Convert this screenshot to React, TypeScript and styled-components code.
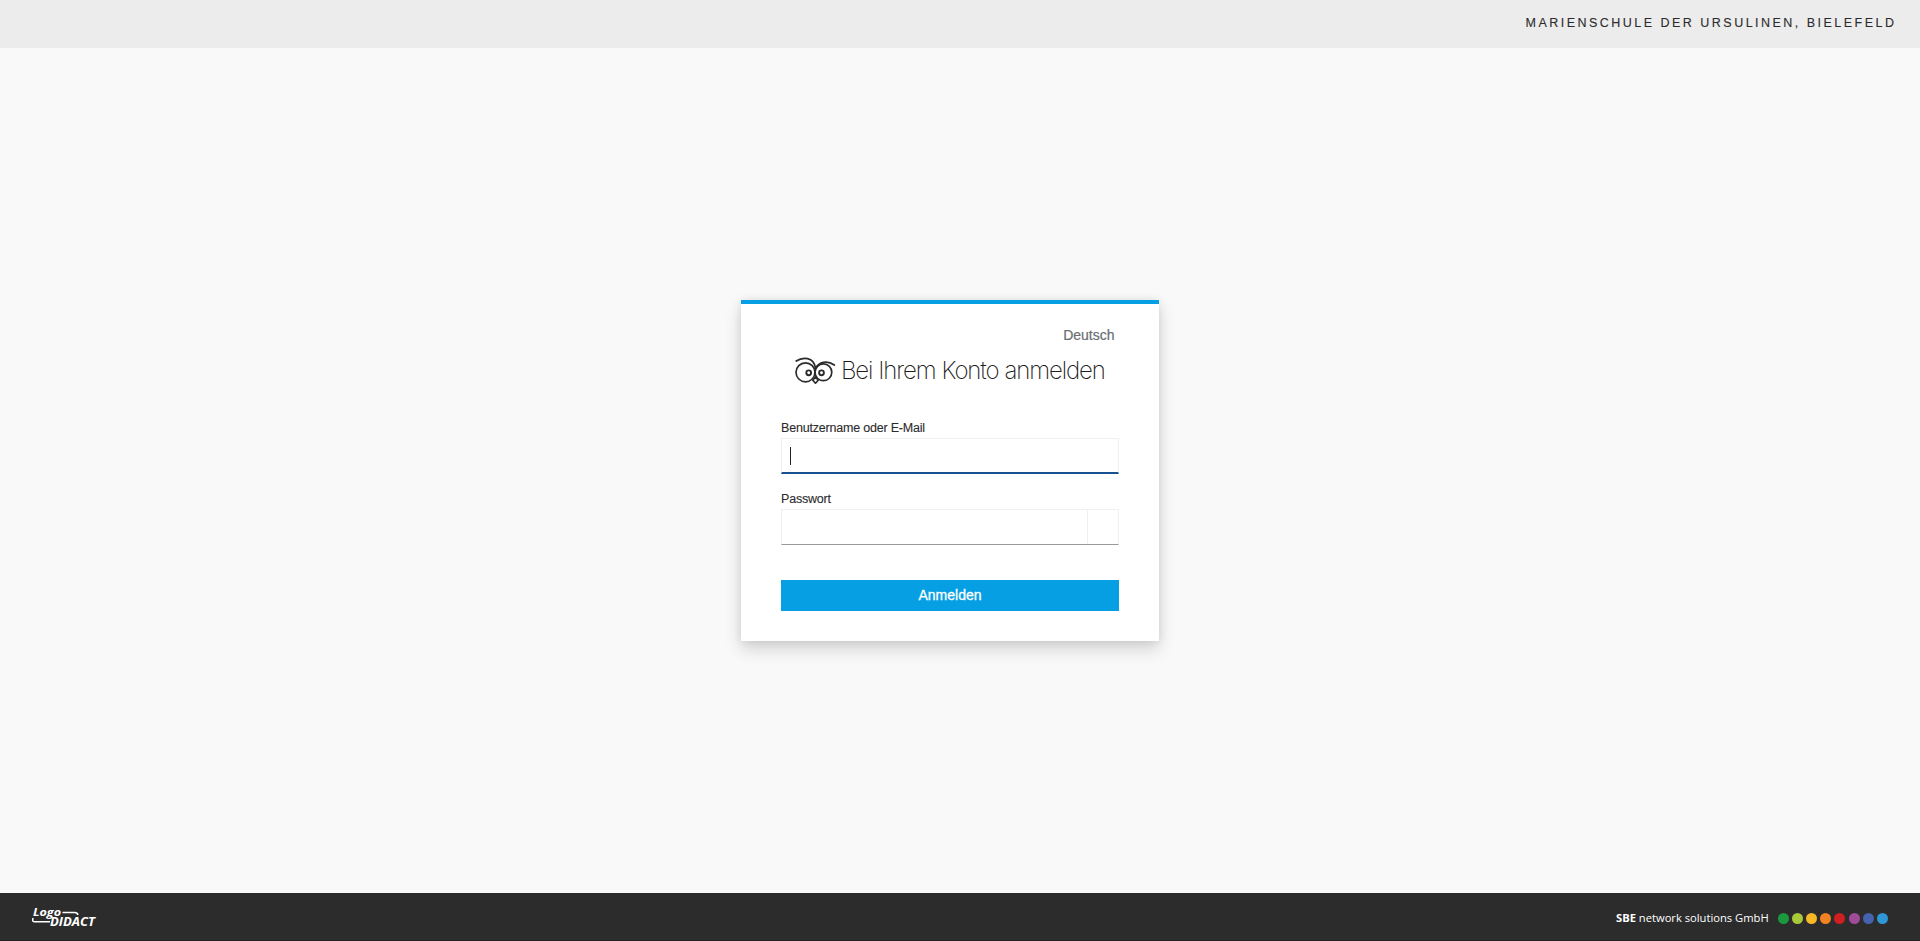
import React from "react";
import styled, { createGlobalStyle } from "styled-components";

const GlobalStyle = createGlobalStyle`
  * { box-sizing: border-box; }
  body {
    margin: 0;
    background: #f9f9f9;
    color: #2b2b2b;
    font-family: "Liberation Sans", Arial, sans-serif;
  }
`;

const Page = styled.div`
  display: flex;
  flex-direction: column;
  height: 100vh;
  overflow: hidden;
`;

const Header = styled.header`
  display: flex;
  justify-content: flex-end;
  height: 48px;
  padding: 15px 23.5px 0 0;
  background: #ececec;
  font-size: 12.5px;
  line-height: 16px;
  letter-spacing: 2.48px;
  text-transform: uppercase;
  white-space: nowrap;
  -webkit-text-stroke: 0.1px #2b2b2b;
`;

const Main = styled.main`
  display: flex;
  flex: 1;
  align-items: center;
  justify-content: center;
  padding-right: 20px;
`;

const Card = styled.section`
  width: 418px;
  height: 341px;
  padding: 22px 40px 0;
  background: #fff;
  border-top: 4px solid #069fe4;
  box-shadow: 0 8px 16px rgba(3, 3, 3, 0.16), 0 0 8px rgba(3, 3, 3, 0.08);
`;

const Language = styled.div`
  padding-right: 4.5px;
  color: #6a6e73;
  font-size: 14px;
  line-height: 18px;
  text-align: right;
  -webkit-text-stroke: 0.2px #6a6e73;
`;

const TitleRow = styled.div`
  display: flex;
  align-items: center;
  height: 30px;
  margin-top: 12px;
  padding-left: 14px;
`;

const Title = styled.h1`
  margin: 0 0 0 5px;
  color: #1c1c1c;
  font-family: Inter, "Liberation Sans", sans-serif;
  font-size: 24px;
  font-weight: 200;
  line-height: 30px;
  letter-spacing: -1.1px;
  word-spacing: 0.3px;
  white-space: nowrap;
`;

const Field = styled.div<{ $gap: number }>`
  margin-top: ${(p) => p.$gap}px;
`;

const Label = styled.label`
  display: block;
  height: 19px;
  font-size: 12.5px;
  line-height: 18px;
  letter-spacing: -0.2px;
  -webkit-text-stroke: 0.1px #2b2b2b;
`;

const InputBox = styled.div<{ $active?: boolean }>`
  display: flex;
  align-items: center;
  height: 36px;
  border: 1px solid #f0f0f0;
  border-bottom: ${(p) => (p.$active ? "2px solid #15528f" : "1px solid #999")};
`;

const Caret = styled.span`
  width: 1px;
  height: 18px;
  margin-left: 8px;
  background: #222;
`;

const Toggle = styled.span`
  width: 31px;
  height: 100%;
  margin-left: auto;
  border-left: 1px solid #f0f0f0;
`;

const Submit = styled.button`
  display: block;
  width: 100%;
  height: 31px;
  margin-top: 35px;
  padding: 0;
  border: 0;
  background: #069fe4;
  color: #fff;
  font: 14px/31px "Liberation Sans", Arial, sans-serif;
  -webkit-text-stroke: 0.3px #fff;
`;

const Footer = styled.footer`
  display: flex;
  align-items: center;
  justify-content: space-between;
  height: 48px;
  padding: 0 32px 0 31px;
  background: #2c2c2c;
  border-bottom: 1px solid #222;
  color: #fff;
`;

const Company = styled.div`
  display: flex;
  align-items: center;
  margin-top: 3px;
  font-family: "Open Sans", "Noto Sans", sans-serif;
  font-size: 11.2px;
  line-height: 16px;
  white-space: pre;
`;

const Dots = styled.div`
  display: flex;
  gap: 3.2px;
  margin-left: 9px;
`;

const Dot = styled.span<{ $color: string }>`
  width: 11px;
  height: 11px;
  border-radius: 50%;
  background: ${(p) => p.$color};
`;

const Brand = styled.svg`
  display: block;
  overflow: visible;
`;

const DOT_COLORS = ["#1a9a3c", "#a7c93a", "#f8b826", "#f08224", "#d01f20", "#9f4c98", "#4562ae", "#3097d6"];

const OwlIcon = () => (
  <svg width="41" height="28" viewBox="0 0 41 28" fill="none" stroke="#2b2b2b" strokeWidth="1.7" strokeLinecap="round" strokeLinejoin="round">
    <circle cx="10.5" cy="15.3" r="9.5" />
    <circle cx="28.4" cy="15.3" r="8.4" />
    <circle cx="13.7" cy="15.8" r="2.4" strokeWidth="1.9" />
    <circle cx="26.5" cy="15.8" r="2.4" strokeWidth="1.9" />
    <path d="M1.3 4C7 .2 19-1 20.5 11.5C24 5 32 3 39.3 8" strokeWidth="1.8" />
    <path d="m20.5 20-2.7 3.2 2.7 3 2.7-3Z" />
  </svg>
);

const LogoDidact = () => (
  <Brand width="65" height="21" viewBox="0 0 65 21" fill="#fff">
    <text x="2" y="9.6" fontFamily="Open Sans" fontSize="10.5" fontWeight="700" fontStyle="italic" textLength="28" lengthAdjust="spacingAndGlyphs">Logo</text>
    <text x="19" y="20" fontFamily="Open Sans" fontSize="11.5" fontWeight="700" fontStyle="italic" textLength="45" lengthAdjust="spacingAndGlyphs">DIDACT</text>
    <path d="M31.5 6.6H43.5C46 6.6 46.7 7.4 47 9M2 12C1.3 15 1.5 15.8 4 15.8H19" fill="none" stroke="#fff" strokeWidth="1.5" />
  </Brand>
);

export default function App() {
  return (
    <Page>
      <GlobalStyle />
      <Header>Marienschule der Ursulinen, Bielefeld</Header>
      <Main>
        <Card>
          <Language>Deutsch</Language>
          <TitleRow>
            <OwlIcon />
            <Title>Bei Ihrem Konto anmelden</Title>
          </TitleRow>
          <Field $gap={33}>
            <Label>Benutzername oder E-Mail</Label>
            <InputBox $active>
              <Caret />
            </InputBox>
          </Field>
          <Field $gap={16}>
            <Label>Passwort</Label>
            <InputBox>
              <Toggle />
            </InputBox>
          </Field>
          <Submit type="button">Anmelden</Submit>
        </Card>
      </Main>
      <Footer>
        <LogoDidact />
        <Company>
          <b>SBE</b> network solutions GmbH
          <Dots>
            {DOT_COLORS.map((color) => (
              <Dot key={color} $color={color} />
            ))}
          </Dots>
        </Company>
      </Footer>
    </Page>
  );
}
